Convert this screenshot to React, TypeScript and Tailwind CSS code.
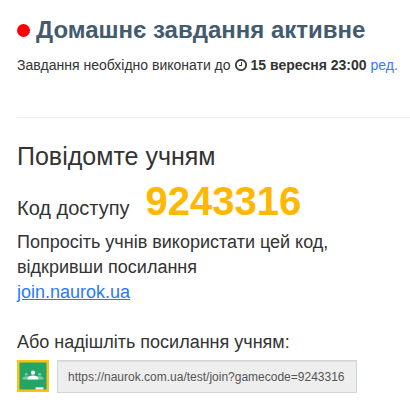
function ClockIcon() {
  return (
    <svg className="size-3 shrink-0" viewBox="0 128 1536 1536" fill="currentColor" aria-hidden="true">
      <path d="M896 544v448q0 14-9 23t-23 9H544q-14 0-23-9t-9-23v-64q0-14 9-23t23-9h224V544q0-14 9-23t23-9h64q14 0 23 9t9 23zm416 352q0-148-73-273t-198-198-273-73-273 73-198 198-73 273 73 273 198 198 273 73 273-73 198-198 73-273zm224 0q0 209-103 385.5T1153.5 1561 768 1664t-385.5-103T103 1281.500 0 896t103-385.500T382.500 231 768 128t385.500 103T1433 510.500 1536 896z" />
    </svg>
  );
}

function ClassroomIcon() {
  return (
    <svg className="block size-8 shrink-0" viewBox="0 0 32 32" aria-hidden="true">
      <rect width="32" height="32" fill="#ffc112" />
      <rect x="2.5" y="2.5" width="27" height="27" fill="#23a566" />
      <g fill="#7bc9a3">
        <circle cx="9.3" cy="14.3" r="1.5" />
        <circle cx="22.7" cy="14.3" r="1.5" />
        <path d="M5.500 19.500v-1c0-1.400 2-2.300 3.800-2.300s3 .5 3.700 1.200v2.100zM26.500 19.500v-1c0-1.400-2-2.300-3.800-2.300s-3 .5-3.700 1.200v2.100z" />
      </g>
      <g fill="#fff">
        <circle cx="16" cy="12.700" r="2.100" />
        <path d="M10.700 19.500v-1.300c0-1.700 2.800-2.700 5.300-2.700s5.300 1 5.300 2.700v1.300z" />
        <rect x="18.500" y="27.300" width="8" height="2.200" fill="#f1f1f1" />
      </g>
    </svg>
  );
}

export default function App() {
  return (
    <main className="h-[418px] w-[410px] overflow-hidden bg-white pl-[17px] pt-[14px] font-['Liberation_Sans',Arial,sans-serif] whitespace-nowrap text-[#333]">
      <h1 className="flex h-8 items-center gap-[6px] text-[24px] font-bold text-[#435b6e]">
        <span className="size-[13px] rounded-full bg-[#ff0000]" />
        Домашнє завдання активне
      </h1>

      <p className="mt-[9px] flex h-5 items-center gap-1 text-[14px]">
        Завдання необхідно виконати до
        <ClockIcon />
        <b>15 вересня 23:00</b>
        <a href="#" className="text-[#337aff]">ред.</a>
      </p>

      <hr className="mt-[42px] border-[#eee]" />

      <section>
        <h2 className="mt-[24px] text-[25px] leading-[28px]">Повідомте учням</h2>
        <div className="mt-[5px] flex h-[52px] items-baseline gap-4 text-[20px] leading-[52px]">
          <span>Код доступу</span>
          <b className="text-[40px] text-[#ffb800]">9243316</b>
        </div>
        <p className="mt-[3px] text-[18px] leading-[25px]">
          Попросіть учнів використати цей код,
          <br />
          відкривши посилання
          <br />
          <a href="#" className="text-[#2878ff] underline">join.naurok.ua</a>
        </p>
      </section>

      <section className="mt-[25px]">
        <h3 className="text-[18px] leading-[25px]">Або надішліть посилання учням:</h3>
        <div className="mt-[5px] flex gap-2">
          <ClassroomIcon />
          <div className="flex h-[33px] w-[300px] items-center border border-[#cfd7de] bg-[#eee] px-[10px] text-[12px] text-[#555] shadow-[inset_0_1px_1px_rgba(0,0,0,0.075)]">
            https://naurok.com.ua/test/join?gamecode=9243316
          </div>
        </div>
      </section>
    </main>
  );
}
